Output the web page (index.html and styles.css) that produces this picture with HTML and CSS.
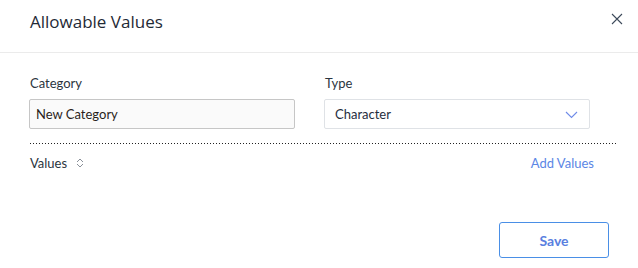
FILE: index.html
```html
<!DOCTYPE html>
<html>
<head>
<meta charset="utf-8">
<link rel="stylesheet" href="styles.css">
</head>
<body>
<div class="dialog">
  <header class="header">
    <h1 class="title">Allowable Values</h1>
    <button class="close" aria-label="Close">
      <svg width="12" height="12" viewBox="0 0 12 12"><path d="M1 1 L11 11 M11 1 L1 11" stroke="#3d4a5a" stroke-width="1.1" fill="none"/></svg>
    </button>
  </header>
  <div class="form">
    <div class="field">
      <label class="label">Category</label>
      <div class="input">New Category</div>
    </div>
    <div class="field">
      <label class="label">Type</label>
      <div class="select">
        <span>Character</span>
        <svg class="chev" width="13" height="8" viewBox="0 0 13 8"><path d="M1 1 L6.5 6.5 L12 1" stroke="#6f8be8" stroke-width="1.1" fill="none"/></svg>
      </div>
    </div>
  </div>
  <div class="divider"></div>
  <div class="values-row">
    <div class="values-label">
      <span>Values</span>
      <svg class="sort" width="8" height="10" viewBox="0 0 8 10"><path d="M1 4 L4 1 L7 4 M1 6 L4 9 L7 6" stroke="#8a9099" stroke-width="1" fill="none"/></svg>
    </div>
    <a class="add-link">Add Values</a>
  </div>
  <div class="footer">
    <button class="save">Save</button>
  </div>
</div>
</body>
</html>
```
FILE: styles.css
```css
html, body {
  margin: 0;
  padding: 0;
  background: #ffffff;
}
.dialog {
  width: 638px;
  height: 268px;
  font-family: "Lato", "Liberation Sans", sans-serif;
  color: #1f2d3d;
}
.header {
  height: 53px;
  box-sizing: border-box;
  border-bottom: 1px solid #ebebeb;
  display: flex;
  align-items: flex-start;
  justify-content: space-between;
  padding: 0 15px 0 30px;
}
.title {
  margin: 0;
  padding-top: 10px;
  font-family: "Open Sans", "Noto Sans", sans-serif;
  font-weight: 400;
  font-size: 17px;
  line-height: 24px;
  color: #1f2a36;
}
.close {
  margin-top: 13px;
  width: 12px;
  height: 12px;
  padding: 0;
  border: 0;
  background: none;
  display: flex;
}
.form {
  display: flex;
  gap: 29px;
  padding: 22px 0 0 29px;
}
.field {
  width: 266px;
  display: flex;
  flex-direction: column;
}
.label {
  font-size: 13px;
  line-height: 16px;
  color: #2b3540;
  padding-left: 1px;
  margin-bottom: 8px;
}
.input, .select {
  height: 30px;
  box-sizing: border-box;
  border-radius: 2px;
  font-size: 13px;
  display: flex;
  align-items: center;
}
.input {
  background: #fafafa;
  border: 1px solid #c6c6c6;
  padding-left: 6px;
  color: #2a1f1a;
}
.select {
  background: #ffffff;
  border: 1px solid #dfe2e6;
  padding: 0 11px 0 10px;
  justify-content: space-between;
  color: #1f2d3d;
}
.chev {
  margin-top: 1px;
}
.divider {
  margin: 14px 21px 0 30px;
  height: 1px;
  background-image: linear-gradient(to right, #222 0, #222 1px, transparent 1px);
  background-size: 3px 1px;
  background-repeat: repeat-x;
}
.values-row {
  display: flex;
  justify-content: space-between;
  align-items: center;
  padding: 11px 44px 0 30px;
  font-size: 13px;
  line-height: 16px;
}
.values-label {
  display: flex;
  align-items: center;
  gap: 9px;
  color: #2b3540;
}
.add-link {
  color: #5b86e5;
}
.footer {
  display: flex;
  justify-content: flex-end;
  padding: 51px 29px 0 0;
}
.save {
  width: 110px;
  height: 36px;
  border: 1px solid #4a8fe6;
  border-radius: 3px;
  background: #ffffff;
  color: #5a7fe0;
  font-family: "Lato", "Liberation Sans", sans-serif;
  font-weight: 700;
  font-size: 14px;
}
```
